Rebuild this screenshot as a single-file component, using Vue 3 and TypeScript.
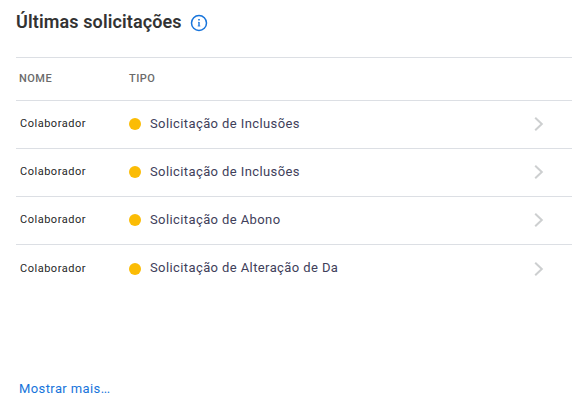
<script setup lang="ts">
interface RequestRow {
  id: number
  name: string
  type: string
}

const rows: RequestRow[] = [
  { id: 1, name: 'Colaborador', type: 'Solicitação de Inclusões' },
  { id: 2, name: 'Colaborador', type: 'Solicitação de Inclusões' },
  { id: 3, name: 'Colaborador', type: 'Solicitação de Abono' },
  { id: 4, name: 'Colaborador', type: 'Solicitação de Alteração de Da' },
]
</script>

<template>
  <section class="panel">
    <header class="heading">
      <h2 class="title">Últimas solicitações</h2>
      <svg class="info" viewBox="0 0 18 18" aria-hidden="true">
        <circle cx="9" cy="9" r="7.5" fill="none" stroke="#1774db" stroke-width="1.5" />
        <path d="M9 8v4.3" fill="none" stroke="#1774db" stroke-width="1.4" />
        <path d="M8 8.3h1M7.6 12h2.8" fill="none" stroke="#1774db" stroke-width=".6" />
        <rect x="8.2" y="5" width="1.6" height="1.5" fill="#1774db" />
      </svg>
    </header>
    <div class="table">
      <div class="head">
        <span>NOME</span>
        <span>TIPO</span>
      </div>
      <div v-for="row in rows" :key="row.id" class="row">
        <span class="name">{{ row.name }}</span>
        <span class="kind">
          <i class="dot"></i>
          <span class="label">{{ row.type }}</span>
        </span>
        <svg class="chevron" viewBox="0 0 10 16" aria-hidden="true">
          <path d="M1.2 1.7 7.8 8l-6.6 6.3" fill="none" stroke="#cdcfd0" stroke-width="2" />
        </svg>
      </div>
    </div>
    <a class="more">Mostrar mais<span class="ellipsis">...</span></a>
  </section>
</template>

<style>
body {
  background: #fff;
}
</style>

<style scoped>
.panel {
  box-sizing: border-box;
  height: 407px;
  padding: 0 14px 8px 16px;
  display: flex;
  flex-direction: column;
  font-family: Roboto, "Liberation Sans", sans-serif;
}
.heading {
  height: 57px;
  box-sizing: border-box;
  padding-top: 11px;
  display: flex;
  align-items: flex-start;
  gap: 8px;
}
.title {
  margin: 0;
  width: 166px;
  white-space: nowrap;
  font-size: 18px;
  line-height: 22px;
  font-weight: 600;
  letter-spacing: 0.12px;
  color: #333;
}
.info {
  width: 18px;
  height: 18px;
  margin-top: 3px;
}
.head,
.row {
  display: grid;
  grid-template-columns: 110px 1fr 10px;
  align-items: center;
  box-sizing: border-box;
  border-top: 1px solid #dcdfe4;
}
.head {
  height: 43px;
  padding: 0 0 1px 3px;
  font-size: 11px;
  font-weight: 500;
  letter-spacing: 0.48px;
  color: #6b6b6b;
}
.row {
  height: 48px;
  padding: 0 28px 1px 3px;
}
.row:last-child {
  height: 49px;
}
.name {
  padding: 0 0 1px 1px;
  font-size: 11px;
  letter-spacing: 0.52px;
  color: #1f1f1f;
}
.kind {
  display: flex;
  align-items: center;
  gap: 9px;
}
.dot {
  width: 12px;
  height: 12px;
  border-radius: 50%;
  background: #fbbc05;
}
.label {
  padding-bottom: 1px;
  font-size: 13px;
  letter-spacing: 0.4px;
  color: #40405a;
}
.row:last-child .label {
  padding-bottom: 2px;
}
.chevron {
  width: 10px;
  height: 16px;
}
.more {
  margin-top: auto;
  padding-left: 3px;
  font-size: 13px;
  line-height: 20px;
  letter-spacing: 0.4px;
  color: #1774db;
}
.ellipsis {
  letter-spacing: -0.4px;
}
</style>
